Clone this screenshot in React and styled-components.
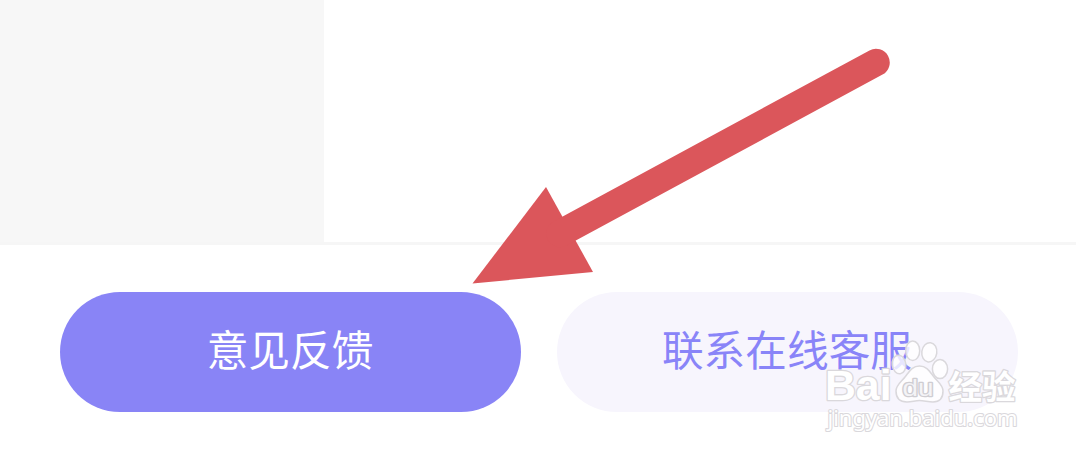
import React from "react";
import styled, {createGlobalStyle} from "styled-components";

const GlobalStyle = createGlobalStyle`
  body {
    margin: 0;
    background: #fff;
    font-family: "Noto Sans CJK SC", "Noto Sans", sans-serif;
  }
`;

const Screen = styled.div`
  position: relative;
  display: flex;
  flex-direction: column;
  width: 1076px;
  height: 456px;
  overflow: hidden;
  background: #fff;
`;

const Content = styled.div`
  display: flex;
  height: 242px;
`;

const Sidebar = styled.div`
  width: 323.5px;
  background: #f7f7f7;
`;

const Footer = styled.div`
  display: flex;
  gap: 36px;
  padding: 47.4px 58px 0 60px;
  border-top: 3px solid #f6f6f6;
`;

const PillButton = styled.button`
  flex: 1;
  height: 119.4px;
  padding: 0 1px 8px 0;
  border: none;
  border-radius: 60px;
  cursor: pointer;
  font-family: inherit;
  font-size: 41.7px;
  line-height: 60px;
  ${props => props.$primary ? `
    background: #8984f6;
    color: #fff;
  ` : `
    background: #f7f5fd;
    color: #8984f8;
  `}
`;

const Overlay = styled.svg`
  position: absolute;
  top: 0;
  left: 0;
  pointer-events: none;
`;

const Mark = styled.g`
  fill: #fff;
  fill-opacity: 0.8;
  stroke: #dad8dc;
  stroke-width: 1.5;
  stroke-linejoin: round;
`;

const MarkText = styled.text`
  font-family: ${props => props.$font || `"Liberation Sans"`}, sans-serif;
  font-size: ${props => props.$size}px;
  font-weight: ${props => props.$bold ? 700 : 400};
  paint-order: stroke;
  stroke-width: ${props => props.$outline || 2.6}px;
  fill-opacity: 1;
`;

const LogoText = styled(MarkText)`
  fill: #f4f3f6;
  stroke: #cfcdd2;
`;

function Arrow() {
    return (
        <g fill="#db565b">
            <path d="M472.5 283.5 L546 187 L593 272 Z" />
            <path d="M560 233.5 L876 62.5" stroke="#db565b" strokeWidth="27.5" strokeLinecap="round" />
        </g>
    )
}

function Watermark() {
    return (
        <Mark>
            <MarkText x="825" y="400" $size={42} $bold textLength="66.5" lengthAdjust="spacingAndGlyphs">Bai</MarkText>
            <ellipse cx="899" cy="364.5" rx="6.8" ry="9.3" transform="rotate(-8 899 364.5)" />
            <ellipse cx="912.7" cy="350.7" rx="7" ry="9.8" />
            <ellipse cx="929.3" cy="352.3" rx="7.5" ry="9.7" transform="rotate(8 929.3 352.3)" />
            <ellipse cx="940" cy="369" rx="7.6" ry="9.5" />
            <path d="M919.5 366 C912 366 909 372 905 377 C901 382 896 385 896 391 C896 399 900 402 907 402 C912 402 915 400.5 919.5 400.5 C924 400.5 928 402 933 402 C940 402 943 398 943 391 C943 385 938 382 934 377 C930 372 927 366 919.5 366 Z" />
            <LogoText x="902.5" y="395.5" $size={24} $outline={2.6} textLength="31" lengthAdjust="spacingAndGlyphs">du</LogoText>
            <MarkText x="948.5" y="398.5" $size={33.5} $font={`"Noto Sans CJK SC"`} $bold>经验</MarkText>
            <MarkText x="827.5" y="425.5" $size={22} $font={`"Noto Sans"`} $outline={2.2} textLength="190" lengthAdjust="spacingAndGlyphs">jingyan.baidu.com</MarkText>
        </Mark>
    )
}

function App() {
    return (
        <>
            <GlobalStyle />
            <Screen>
                <Content>
                    <Sidebar />
                </Content>
                <Footer>
                    <PillButton $primary>意见反馈</PillButton>
                    <PillButton>联系在线客服</PillButton>
                </Footer>
                <Overlay width="1076" height="456" viewBox="0 0 1076 456">
                    <Arrow />
                    <Watermark />
                </Overlay>
            </Screen>
        </>
    )
}

export default App;
